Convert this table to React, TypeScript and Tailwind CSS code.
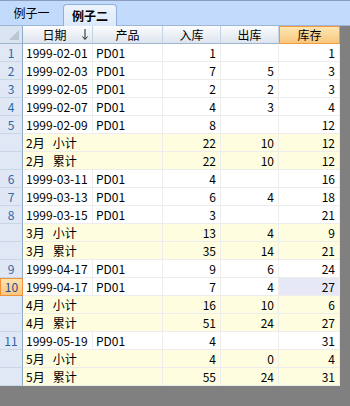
import React from 'react';

type Row =
  | { kind: 'data'; no: number; date: string; product: string; inQty: number | null; outQty: number | null; stock: number }
  | { kind: 'sum'; month: string; label: string; inQty: number; outQty: number; stock: number };

const rows: Row[] = [
  { kind: 'data', no: 1, date: '1999-02-01', product: 'PD01', inQty: 1, outQty: null, stock: 1 },
  { kind: 'data', no: 2, date: '1999-02-03', product: 'PD01', inQty: 7, outQty: 5, stock: 3 },
  { kind: 'data', no: 3, date: '1999-02-05', product: 'PD01', inQty: 2, outQty: 2, stock: 3 },
  { kind: 'data', no: 4, date: '1999-02-07', product: 'PD01', inQty: 4, outQty: 3, stock: 4 },
  { kind: 'data', no: 5, date: '1999-02-09', product: 'PD01', inQty: 8, outQty: null, stock: 12 },
  { kind: 'sum', month: '2月', label: '小计', inQty: 22, outQty: 10, stock: 12 },
  { kind: 'sum', month: '2月', label: '累计', inQty: 22, outQty: 10, stock: 12 },
  { kind: 'data', no: 6, date: '1999-03-11', product: 'PD01', inQty: 4, outQty: null, stock: 16 },
  { kind: 'data', no: 7, date: '1999-03-13', product: 'PD01', inQty: 6, outQty: 4, stock: 18 },
  { kind: 'data', no: 8, date: '1999-03-15', product: 'PD01', inQty: 3, outQty: null, stock: 21 },
  { kind: 'sum', month: '3月', label: '小计', inQty: 13, outQty: 4, stock: 9 },
  { kind: 'sum', month: '3月', label: '累计', inQty: 35, outQty: 14, stock: 21 },
  { kind: 'data', no: 9, date: '1999-04-17', product: 'PD01', inQty: 9, outQty: 6, stock: 24 },
  { kind: 'data', no: 10, date: '1999-04-17', product: 'PD01', inQty: 7, outQty: 4, stock: 27 },
  { kind: 'sum', month: '4月', label: '小计', inQty: 16, outQty: 10, stock: 6 },
  { kind: 'sum', month: '4月', label: '累计', inQty: 51, outQty: 24, stock: 27 },
  { kind: 'data', no: 11, date: '1999-05-19', product: 'PD01', inQty: 4, outQty: null, stock: 31 },
  { kind: 'sum', month: '5月', label: '小计', inQty: 4, outQty: 0, stock: 4 },
  { kind: 'sum', month: '5月', label: '累计', inQty: 55, outQty: 24, stock: 31 },
];

const SELECTED_ROW = 10;

const cols = 'grid grid-cols-[23px_70px_70px_58px_58px_61px]';
const headCell =
  'flex items-center justify-center border-r border-b border-r-[#c5d2e2] border-b-[#9fb4cd] bg-gradient-to-b from-[#fbfcfd] to-[#dde4ee]';
const numCell = 'flex items-center justify-end pr-[4px] border-r border-b border-[#ededed]';

const App = () => {
  return (
    <div
      className="w-[350px] h-[406px] bg-[#808080] overflow-hidden text-[12px] leading-none text-black"
      style={{ fontFamily: '"Noto Sans CJK SC", "DejaVu Sans", sans-serif' }}
    >
      {/* tab strip */}
      <div className="h-[26px] bg-[#c2dafc] border-t border-[#8a9dba] border-b border-b-[#9db6d8] flex items-end">
        <div className="w-[63px] h-full flex items-center justify-center pb-[1px]">例子一</div>
        <div className="w-[54px] h-[22px] mb-[-1px] rounded-t-[4px] border border-b-0 border-[#93afd6] bg-gradient-to-b from-[#eef4fd] to-[#dce8fa] flex items-center justify-center font-bold">
          例子二
        </div>
      </div>

      <div className="w-[340px] bg-white">
        {/* column headers */}
        <div className={`${cols} h-[18px]`}>
          <div className="relative border-r border-b border-r-[#8fa9c8] border-b-[#9fb4cd] bg-[#dbe5f2]">
            <svg className="absolute right-[3px] bottom-[3px]" width="10" height="10" viewBox="0 0 10 10">
              <polygon points="10,0 10,10 0,10" fill="#b9c6d6" />
            </svg>
          </div>
          <div className={headCell}>
            <span className="flex-1 text-center pl-[4px]">日期</span>
            <svg className="mr-[4px]" width="6" height="11" viewBox="0 0 6 11">
              <path d="M3 0 V10 M0.5 7.5 L3 10.5 L5.5 7.5" stroke="#222" strokeWidth="1" fill="none" />
            </svg>
          </div>
          <div className={headCell}>产品</div>
          <div className={headCell}>入库</div>
          <div className={headCell}>出库</div>
          <div className="flex items-center justify-center border border-[#f29a3e] bg-gradient-to-b from-[#fde6b2] to-[#f7c77d]">
            库存
          </div>
        </div>

        {rows.map((r, i) => {
          if (r.kind === 'sum') {
            return (
              <div key={i} className={`${cols} h-[18px] bg-[#fffde0]`}>
                <div className="border-r border-b border-r-[#8fa9c8] border-b-[#c9d6e6] bg-[#dfe8f4]" />
                <div className="col-span-2 flex items-center gap-[8px] pl-[3px] border-r border-b border-[#ededed]">
                  <span>{r.month}</span>
                  <span>{r.label}</span>
                </div>
                <div className={numCell}>{r.inQty}</div>
                <div className={numCell}>{r.outQty}</div>
                <div className={numCell}>{r.stock}</div>
              </div>
            );
          }
          const selected = r.no === SELECTED_ROW;
          return (
            <div key={i} className={`${cols} h-[18px] bg-white`}>
              <div
                className={
                  selected
                    ? 'flex items-center justify-center border border-[#f0913a] bg-gradient-to-b from-[#fde3ad] to-[#f8c57c] text-[#1e4f8f]'
                    : 'flex items-center justify-center border-r border-b border-r-[#8fa9c8] border-b-[#c9d6e6] bg-[#dfe8f4] text-[#2f66a8]'
                }
              >
                {r.no}
              </div>
              <div className="flex items-center pl-[3px] border-r border-b border-[#ededed]">{r.date}</div>
              <div className="flex items-center pl-[3px] border-r border-b border-[#ededed]">{r.product}</div>
              <div className={numCell}>{r.inQty ?? ''}</div>
              <div className={numCell}>{r.outQty ?? ''}</div>
              <div className={`${numCell} ${selected ? 'bg-[#e6e9f5]' : ''}`}>{r.stock}</div>
            </div>
          );
        })}
      </div>
    </div>
  );
};

export default App;
